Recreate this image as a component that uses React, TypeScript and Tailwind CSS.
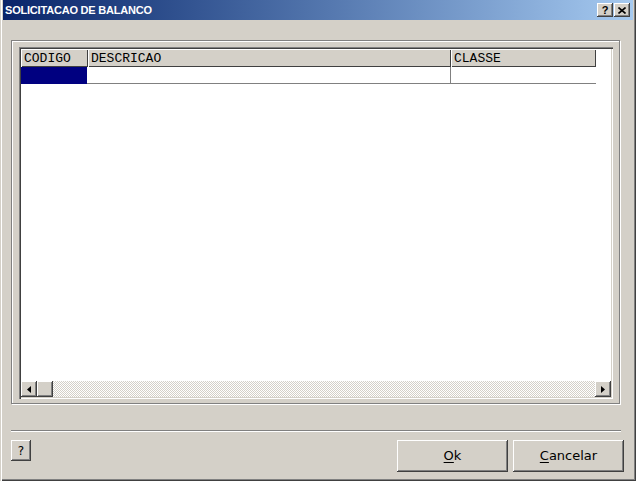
const raised =
  "bg-[#d4d0c8] shadow-[inset_-1px_-1px_#404040,inset_1px_1px_#fff,inset_-2px_-2px_#808080,inset_2px_2px_#d4d0c8]";

const columns = [
  { title: "CODIGO", width: "w-[67px]" },
  { title: "DESCRICAO", width: "w-[363px]" },
  { title: "CLASSE", width: "w-[145px]" },
];

function Arrow({ dir }: { dir: "left" | "right" }) {
  return (
    <div className={`w-[16px] h-[16px] flex items-center justify-center ${raised}`}>
      <svg width="4" height="7" viewBox="0 0 4 7">
        {dir === "left" ? (
          <path d="M4 0 L0 3.5 L4 7 Z" fill="#000" />
        ) : (
          <path d="M0 0 L4 3.5 L0 7 Z" fill="#000" />
        )}
      </svg>
    </div>
  );
}

export default function App() {
  return (
    <div className="w-[636px] h-[481px] bg-[#d4d0c8] overflow-hidden font-['DejaVu_Sans',sans-serif] shadow-[inset_1px_0_#d4d0c8,inset_2px_0_#fff,inset_-1px_-1px_#404040,inset_-2px_-2px_#808080]">
      {/* Title bar */}
      <div className="ml-[3px] w-[630px] h-[20px] flex items-center pl-[2px] pr-[3px] bg-gradient-to-r from-[#0a246a] to-[#a6caf0]">
        <span className="text-white font-bold text-[11px] font-['Liberation_Sans',sans-serif] tracking-[-0.2px]">
          SOLICITACAO DE BALANCO
        </span>
        <div className="ml-auto flex gap-[1px]">
          <div className={`w-[16px] h-[14px] flex items-center justify-center text-[11px] font-bold leading-none font-['Liberation_Sans',sans-serif] ${raised}`}>
            ?
          </div>
          <div className={`w-[16px] h-[14px] flex items-center justify-center ${raised}`}>
            <svg width="8" height="7" viewBox="0 0 8 7">
              <path d="M0.5 0.5 L7.5 6.5 M7.5 0.5 L0.5 6.5" stroke="#000" strokeWidth="1.6" />
            </svg>
          </div>
        </div>
      </div>

      <div className="pl-[11px] pt-[20px]">
        {/* Group box */}
        <div className="w-[609px] h-[364px] border border-[#808080] shadow-[inset_1px_1px_#fff,1px_1px_#fff] pl-[7px] pt-[6px]">
          {/* Grid */}
          <div className="w-[594px] h-[352px] bg-white p-[2px] flex flex-col shadow-[inset_1px_1px_#808080,inset_2px_2px_#404040,inset_-1px_-1px_#fff,inset_-2px_-2px_#d4d0c8]">
            <div className="flex h-[18px] font-['Liberation_Mono',monospace] text-[13px] text-black">
              {columns.map((c) => (
                <div
                  key={c.title}
                  className={`${c.width} h-full pl-[3px] leading-[19px] bg-[#d4d0c8] shadow-[inset_1px_1px_#fff,inset_-1px_-1px_#404040]`}
                >
                  {c.title}
                </div>
              ))}
            </div>
            <div className="flex h-[17px]">
              <div className="w-[66px] h-full bg-[#000080]" />
              <div className="w-[364px] h-full border-b border-r border-[#808080]" />
              <div className="w-[145px] h-full border-b border-[#808080]" />
            </div>
            <div className="flex-1" />
            {/* Horizontal scrollbar */}
            <div className="flex h-[16px]">
              <Arrow dir="left" />
              <div className={`w-[16px] h-[16px] ${raised}`} />
              <div className="flex-1 bg-[conic-gradient(#fff_25%,#d4d0c8_0_50%,#fff_0_75%,#d4d0c8_0)] bg-[length:2px_2px]" />
              <Arrow dir="right" />
            </div>
          </div>
        </div>

        {/* Separator */}
        <div className="mt-[26px] w-[610px] h-[2px] border-t border-t-[#808080] border-b border-b-white" />

        {/* Buttons */}
        <div className="mt-[8px] w-[613px] flex items-start">
          <button className={`w-[20px] h-[21px] text-[12px] leading-none text-black ${raised}`}>?</button>
          <div className="ml-auto flex gap-[5px]">
            <button className={`w-[111px] h-[32px] text-[13px] text-black ${raised}`}>
              <span className="underline underline-offset-[2px]">O</span>k
            </button>
            <button className={`w-[111px] h-[32px] text-[13px] text-black ${raised}`}>
              <span className="underline underline-offset-[2px]">C</span>ancelar
            </button>
          </div>
        </div>
      </div>
    </div>
  );
}
